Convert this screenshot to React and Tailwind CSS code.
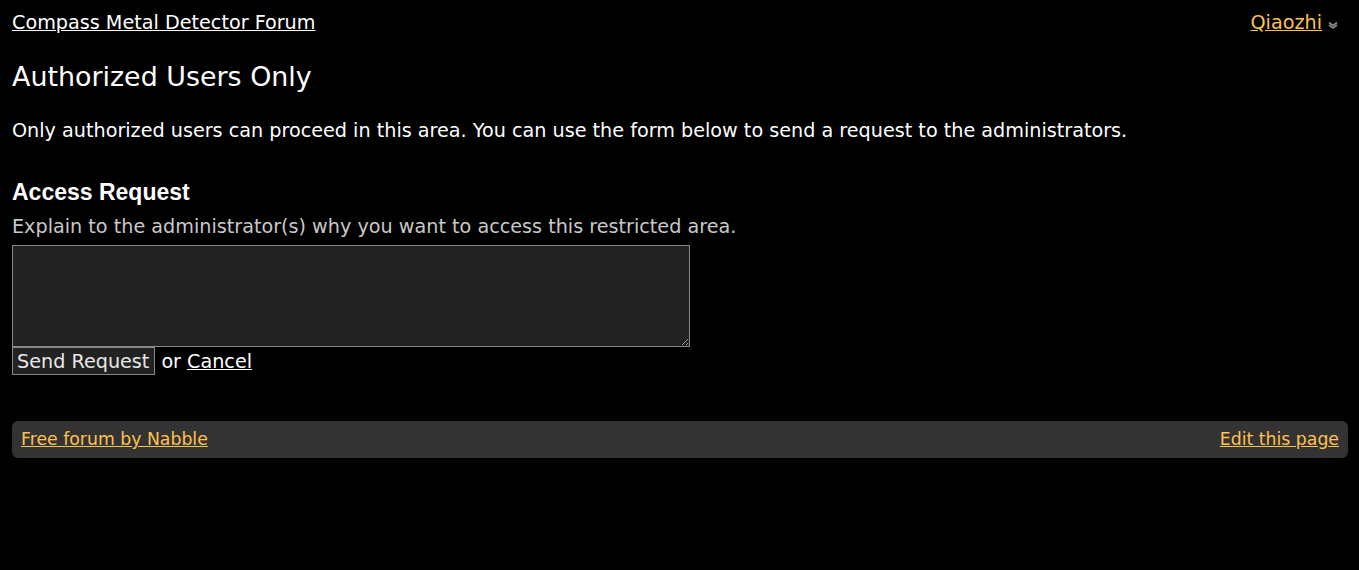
import React from "react";

function DropArrow() {
  return (
    <svg width="10" height="8" viewBox="0 0 10 8" className="inline-block ml-1.5 mt-1">
      <path d="M1 1.5 L5 4.5 L9 1.5" fill="none" stroke="#888" strokeWidth="1.6" />
      <path d="M1 4 L5 7 L9 4" fill="none" stroke="#888" strokeWidth="1.6" />
    </svg>
  );
}

export default function App() {
  return (
    <div
      className="min-h-[570px] bg-black text-white pl-3 pr-[11px] text-[19.2px]"
      style={{ fontFamily: '"DejaVu Sans", Verdana, sans-serif' }}
    >
      <div className="flex items-center justify-between pt-[10px] h-[35px] leading-[24px]">
        <a href="#" className="underline text-white">
          Compass Metal Detector Forum
        </a>
        <div className="flex items-center pr-[10px]">
          <a href="#" className="underline text-[#ffc24d]">
            Qiaozhi
          </a>
          <DropArrow />
        </div>
      </div>

      <h1 className="text-[26.9px] leading-[34px] mt-[25px]">Authorized Users Only</h1>

      <p className="mt-[25px] leading-[24px]">
        Only authorized users can proceed in this area. You can use the form below to send a request
        to the administrators.
      </p>

      <h2
        className="text-[23px] font-bold leading-[26px] mt-[36px]"
        style={{ fontFamily: '"Liberation Sans", Arial, sans-serif' }}
      >
        Access Request
      </h2>
      <div className="text-[#c8c8c8] leading-[24px] mt-[10px]">
        Explain to the administrator(s) why you want to access this restricted area.
      </div>
      <div className="mt-[6px]">
        <textarea className="block w-[678px] h-[102px] bg-[#222] border border-[#888] text-white" />
      </div>
      <div className="flex items-center h-[28px]">
        <button className="h-[28px] pl-[4px] pr-[5px] pt-[1px] bg-[#222] border border-[#888] text-[#e8e8e8] leading-[24px]">
          Send Request
        </button>
        <span className="ml-[6px] pt-[2px]">or</span>
        <a href="#" className="underline ml-[6px] pt-[2px]">
          Cancel
        </a>
      </div>

      <div className="mt-[46px] h-[37px] bg-[#333] rounded-[6px] flex items-center justify-between px-[9px] pt-[1px] text-[17.3px]">
        <a href="#" className="underline text-[#ffc24d]">
          Free forum by Nabble
        </a>
        <a href="#" className="underline text-[#ffc24d]">
          Edit this page
        </a>
      </div>
    </div>
  );
}
